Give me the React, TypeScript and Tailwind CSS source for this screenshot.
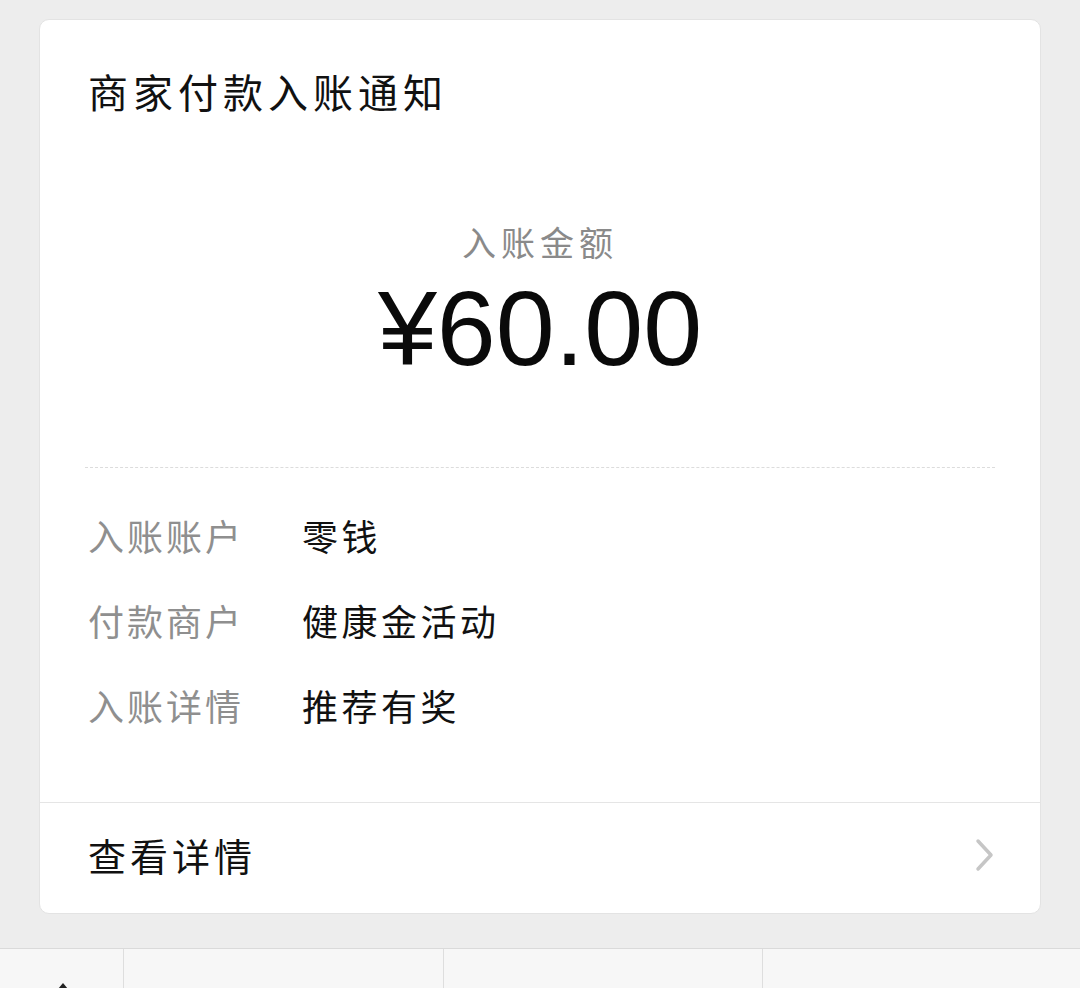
const rows = [
  { label: '入账账户', value: '零钱' },
  { label: '付款商户', value: '健康金活动' },
  { label: '入账详情', value: '推荐有奖' },
];

const cjk = { fontFamily: '"Noto Sans CJK SC", "Noto Sans", sans-serif' };

export default function App() {
  return (
    <div className="h-[988px] w-[1080px] overflow-hidden bg-[#ededed] flex flex-col" style={cjk}>
      <div className="pt-[19px] px-[39px]">
        <div className="bg-white rounded-[10px] border border-[#e3e3e3] flex flex-col">
          <div className="pt-[51px] pl-[48px] text-[40px] leading-[40px] tracking-[5px] text-[#111]">
            商家付款入账通知
          </div>

          <div className="mt-[114px] text-center text-[34px] leading-[34px] tracking-[5px] text-[#8a8a8a]">
            入账金额
          </div>
          <div
            className="mt-[16px] text-center text-[106px] leading-[106px] text-[#0a0a0a]"
            style={{ fontFamily: '"Liberation Sans", Arial, sans-serif' }}
          >
            ¥60.00
          </div>

          <div className="mt-[86px] mx-[45px] border-t border-dashed border-[#dcdcdc]" />

          <div className="mt-[49px] pl-[48px] flex flex-col gap-[49px]">
            {rows.map((r) => (
              <div key={r.label} className="flex text-[36px] leading-[36px]">
                <div className="w-[214px] tracking-[3px] text-[#8f8f8f]">{r.label}</div>
                <div className="tracking-[3.5px] text-[#111]">{r.value}</div>
              </div>
            ))}
          </div>

          <div className="mt-[79px] border-t border-[#e5e5e5]" />

          <div className="h-[110px] pl-[48px] pr-[44px] pb-[6px] flex items-center justify-between">
            <div className="text-[38px] leading-[38px] tracking-[4px] text-[#111]">查看详情</div>
            <svg width="22" height="34" viewBox="0 0 22 34" fill="none">
              <path d="M4 3 L17 17 L4 31" stroke="#c6c6c6" strokeWidth="3.5" strokeLinecap="round" strokeLinejoin="round" />
            </svg>
          </div>
        </div>
      </div>

      <div className="mt-[34px] flex-1 bg-[#f7f7f7] border-t border-[#dadada] flex">
        <div className="w-[124px] border-r border-[#dedede] relative">
          <div className="absolute left-[58px] top-[34px] w-0 h-0 border-l-[5px] border-r-[5px] border-b-[6px] border-l-transparent border-r-transparent border-b-[#222]" />
        </div>
        <div className="w-[320px] border-r border-[#dedede]" />
        <div className="w-[319px] border-r border-[#dedede]" />
        <div className="flex-1" />
      </div>
    </div>
  );
}
